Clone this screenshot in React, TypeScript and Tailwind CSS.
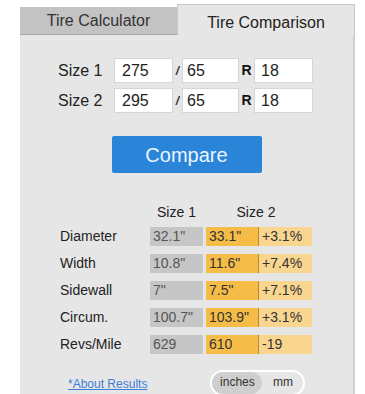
import React, { useState } from "react";

interface Row {
  label: string;
  a: string;
  b: string;
  diff: string;
}

const rows: Row[] = [
  { label: "Diameter", a: '32.1"', b: '33.1"', diff: "+3.1%" },
  { label: "Width", a: '10.8"', b: '11.6"', diff: "+7.4%" },
  { label: "Sidewall", a: '7"', b: '7.5"', diff: "+7.1%" },
  { label: "Circum.", a: '100.7"', b: '103.9"', diff: "+3.1%" },
  { label: "Revs/Mile", a: "629", b: "610", diff: "-19" },
];

const SizeRow = ({ label, w, r, d }: { label: string; w: string; r: string; d: string }) => (
  <div className="flex items-center h-[25px]">
    <span className="w-[56px] text-[16px] text-[#222]">{label}</span>
    <input
      className="w-[59px] h-[25px] bg-white border border-[#d6d6d6] pl-[7px] text-[16px] text-[#222] outline-none"
      defaultValue={w}
    />
    <span className="w-[9px] text-center text-[12px] font-bold italic text-[#333]">/</span>
    <input
      className="w-[57px] h-[25px] bg-white border border-[#d6d6d6] pl-[4px] text-[16px] text-[#222] outline-none"
      defaultValue={r}
    />
    <span className="w-[15px] text-center text-[14px] font-bold text-[#111]">R</span>
    <input
      className="w-[59px] h-[25px] bg-white border border-[#d6d6d6] pl-[6px] text-[16px] text-[#222] outline-none"
      defaultValue={d}
    />
  </div>
);

export default function App() {
  const [unit, setUnit] = useState<"inches" | "mm">("inches");

  return (
    <div
      className="h-[394px] overflow-hidden bg-white pt-[4px] pl-[20px]"
      style={{ fontFamily: '"Liberation Sans", Arial, sans-serif' }}
    >
      <div className="w-[335px]">
        {/* tabs */}
        <div className="flex items-end h-[31px]">
          <div className="w-[157px] h-[28px] bg-[#c3c3c3] border-b border-[#a9a9a9] flex items-center justify-center pt-[1px] text-[16px] text-[#333]">
            Tire Calculator
          </div>
          <div className="flex-1 h-[31px] bg-[#e6e6e6] border border-b-0 border-[#c8c8c8] flex items-start justify-center pt-[6px] text-[16px] text-[#222]">
            Tire Comparison
          </div>
        </div>

        {/* body */}
        <div className="bg-[#e6e6e6] border-r-2 border-[#d0d0d0] h-[400px] pt-[23px]">
          <div className="pl-[38px] flex flex-col gap-[5px]">
            <SizeRow label="Size 1" w="275" r="65" d="18" />
            <SizeRow label="Size 2" w="295" r="65" d="18" />
          </div>

          <div className="flex justify-center mt-[23px]">
            <button className="w-[150px] h-[37px] bg-[#2a85d9] rounded-[2px] text-[20px] text-[#eaf4ff]">
              Compare
            </button>
          </div>

          {/* results */}
          <div className="mt-[31px] pl-[40px]">
            <div className="flex h-[16px] items-center text-[14px] text-[#222]">
              <span className="w-[90px]" />
              <span className="w-[53px] text-center">Size 1</span>
              <span className="w-[3px]" />
              <span className="w-[100px] text-center">Size 2</span>
            </div>
            <div className="mt-[7px] flex flex-col gap-[8px]">
              {rows.map((row) => (
                <div key={row.label} className="flex h-[19px] items-center text-[14px]">
                  <span className="w-[90px] text-[#222]">{row.label}</span>
                  <span className="w-[53px] h-[19px] leading-[19px] bg-[#c6c6c6] text-[#555] pl-[3px] rounded-[1px]">
                    {row.a}
                  </span>
                  <span className="w-[3px]" />
                  <span className="w-[53px] h-[19px] leading-[19px] bg-[#f5bc48] text-[#333] pl-[3px] border-r border-[#b98a35]">
                    {row.b}
                  </span>
                  <span className="w-[53px] h-[19px] leading-[19px] bg-[#f9d68f] text-[#333] pl-[3px]">
                    {row.diff}
                  </span>
                </div>
              ))}
            </div>
          </div>

          {/* footer */}
          <div className="flex items-start mt-[16px] pl-[48px]">
            <a href="#" className="text-[12px] leading-[14px] text-[#3c7fd6] underline mt-[7px]">
              *About Results
            </a>
            <div className="ml-[63px] flex w-[95px] h-[26px] rounded-full border-2 border-white bg-[#e6e6e6] text-[12px] text-[#333]">
              <button
                onClick={() => setUnit("inches")}
                className={
                  unit === "inches"
                    ? "w-[50px] h-full rounded-full bg-[#cfcfcf] pb-[2px]"
                    : "w-[50px] h-full rounded-full pb-[2px]"
                }
              >
                inches
              </button>
              <button
                onClick={() => setUnit("mm")}
                className={
                  unit === "mm"
                    ? "flex-1 h-full rounded-full bg-[#cfcfcf] pb-[2px]"
                    : "flex-1 h-full rounded-full pb-[2px]"
                }
              >
                mm
              </button>
            </div>
          </div>
        </div>
      </div>
    </div>
  );
}
